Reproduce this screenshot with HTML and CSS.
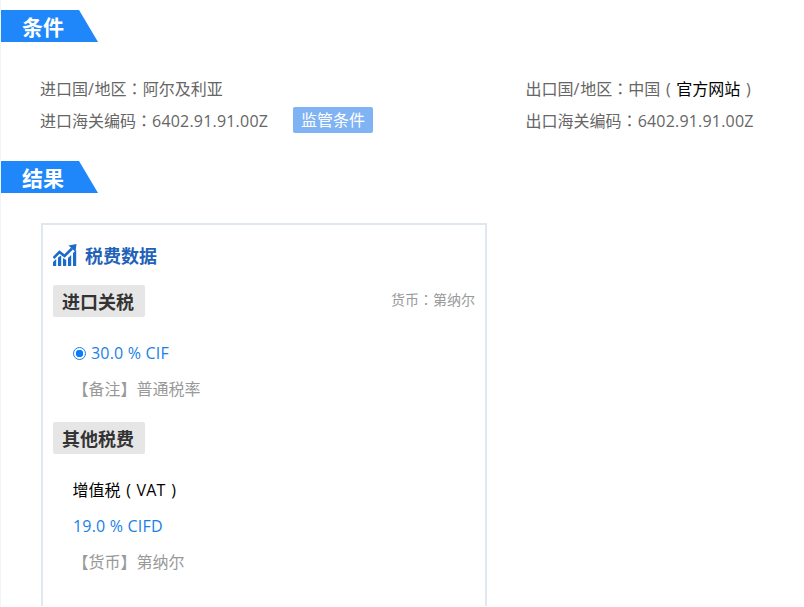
FILE: index.html
```html
<!DOCTYPE html>
<html lang="zh-CN">
<head>
<meta charset="utf-8">
<title>条件</title>
<link rel="stylesheet" href="styles.css">
</head>
<body>
<div class="page">
  <h2 class="banner banner-first">条件</h2>
  <div class="cond">
    <div class="cond-col">
      <p class="line"><span>进口国<span class="slash">/</span>地区<span class="punct" lang="zh-TW">：</span>阿尔及利亚</span></p>
      <p class="line"><span>进口海关编码<span class="punct" lang="zh-TW">：</span><span class="num">6402.91.91.00Z</span></span><span class="tag">监管条件</span></p>
    </div>
    <div class="cond-col cond-right">
      <p class="line"><span>出口国<span class="slash">/</span>地区<span class="punct" lang="zh-TW">：</span>中国<span class="paren">(</span><a class="link">官方网站</a><span class="paren">)</span></span></p>
      <p class="line"><span>出口海关编码<span class="punct" lang="zh-TW">：</span><span class="num">6402.91.91.00Z</span></span></p>
    </div>
  </div>
  <h2 class="banner">结果</h2>
  <section class="card">
    <div class="card-title">
      <svg class="chart" width="24" height="24" viewBox="0 0 24 24" aria-hidden="true">
        <path d="M0.5 15 6.5 9 11.5 13 19 5.5" fill="none" stroke="#1a6ccc" stroke-width="2.6"/>
        <path d="M15.5 2.5 23.5 1 22.5 9Z" fill="#1a6ccc"/>
        <path d="M0 19 3.2 16V23H0ZM5 14.5 8.2 12.5V23H5ZM10 15 13.2 17V23H10ZM15 15 18.2 12V23H15ZM20 10 23.2 7V23H20Z" fill="#1a6ccc"/>
      </svg>
      <span>税费数据</span>
    </div>
    <div class="sub-row">
      <h3 class="sub">进口关税</h3>
      <span class="currency">货币<span class="punct" lang="zh-TW">：</span>第纳尔</span>
    </div>
    <div class="rate-row first">
      <span class="radio"></span><span class="blue num">30.0 % CIF</span>
    </div>
    <div class="rate-row note"><span>【备注】普通税率</span></div>
    <h3 class="sub other">其他税费</h3>
    <div class="rate-row vat"><span>增值税<span class="paren">(</span><span class="num">VAT</span><span class="paren">)</span></span></div>
    <div class="rate-row"><span class="blue num">19.0 % CIFD</span></div>
    <div class="rate-row note"><span>【货币】第纳尔</span></div>
  </section>
</div>
</body>
</html>
```
FILE: styles.css
```css
html, body {
  margin: 0;
  height: 607px;
  overflow: hidden;
  background: #fff;
}
body {
  font-family: "Open Sans", "Noto Sans CJK SC", sans-serif;
  font-size: 16px;
  color: #666;
  text-spacing-trim: space-all;
}
.page {
  border-left: 1px solid #eef5fb;
  padding-top: 10px;
  height: 597px;
}
.punct {
  font-family: "Noto Sans CJK TC", sans-serif;
}
.num {
  letter-spacing: 0.2px;
}
.slash {
  letter-spacing: 0.7px;
}
.paren {
  display: inline-block;
  width: 16px;
  text-align: center;
}
.banner {
  margin: 0;
  width: 97px;
  height: 32px;
  box-sizing: border-box;
  padding-left: 21px;
  background: #1f87f9;
  color: #fff;
  font-size: 21px;
  font-weight: 700;
  line-height: 34px;
  clip-path: polygon(0 0, 78px 0, 97px 100%, 0 100%);
}
.cond {
  display: flex;
  padding: 30px 0 25px 39px;
}
.cond-col {
  width: 485.6px;
}
.cond-right {
  width: auto;
}
.line {
  display: flex;
  align-items: center;
  margin: 0;
  height: 32px;
  line-height: 32px;
  white-space: nowrap;
}
.link {
  color: #000;
}
.tag {
  margin-left: 25px;
  width: 80px;
  height: 26px;
  line-height: 26px;
  text-align: center;
  background: #7fb3f3;
  color: #fff;
  border-radius: 2px;
}
.card {
  margin: 30px 0 0 40px;
  width: 446px;
  height: 383px;
  box-sizing: border-box;
  border: 2px solid #dfe8f1;
  border-bottom: 0;
  padding: 0 10px;
}
.card-title {
  display: flex;
  align-items: center;
  gap: 8px;
  height: 24px;
  margin-top: 18px;
  color: #1f62b8;
  font-size: 18px;
  font-weight: 700;
}
.sub-row {
  display: flex;
  justify-content: space-between;
  align-items: center;
  margin-top: 18px;
}
.sub {
  margin: 0;
  width: 92px;
  height: 32px;
  box-sizing: border-box;
  padding-left: 9px;
  line-height: 34px;
  background: #e6e6e6;
  border-radius: 2px;
  color: #333;
  font-size: 18px;
  font-weight: 700;
}
.other {
  margin-top: 15px;
}
.currency {
  font-size: 14px;
  color: #999;
  margin-bottom: 4px;
}
.rate-row {
  display: flex;
  align-items: center;
  height: 36px;
  line-height: 36px;
  padding-left: 20px;
}
.rate-row.first {
  margin-top: 18px;
}
.rate-row.vat {
  margin-top: 18px;
  color: #000;
}
.blue {
  color: #1a7fe8;
}
.note {
  color: #999;
  padding-left: 19.5px;
}
.vat {
  padding-left: 19.5px;
}
.radio {
  box-sizing: border-box;
  width: 13px;
  height: 13px;
  margin-right: 5px;
  border: 1.5px solid #1a7fe8;
  border-radius: 50%;
  background: radial-gradient(circle, #0a7cff 0 3.5px, #fff 4px);
}
```
